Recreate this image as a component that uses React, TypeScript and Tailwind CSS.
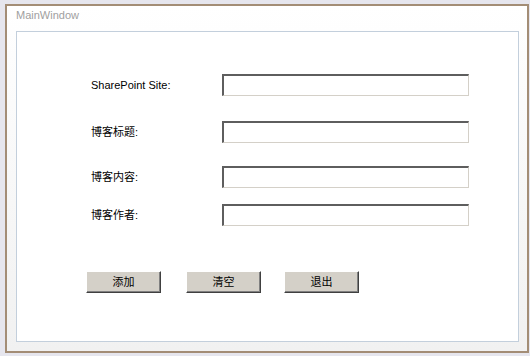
const font = { fontFamily: '"Liberation Sans", "Noto Sans CJK SC", sans-serif' };

const fields = [
  { label: 'SharePoint Site:', mt: 'mt-[42px]' },
  { label: '博客标题:', mt: 'mt-[25px]' },
  { label: '博客内容:', mt: 'mt-[23px]' },
  { label: '博客作者:', mt: 'mt-[16px]' },
];

const Field = ({ label, mt }: { label: string; mt: string }) => (
  <div className={`flex items-center ${mt}`}>
    <div className="w-[131px] text-[11px] leading-[14px] text-black">{label}</div>
    <input
      type="text"
      className="h-[22px] w-[247px] border-t-2 border-l-2 border-b border-r border-t-[#5e5e5e] border-l-[#5e5e5e] border-b-[#d4d0c8] border-r-[#d4d0c8] bg-white px-1 text-[11px] outline-none"
    />
  </div>
);

const Btn = ({ text, ml }: { text: string; ml: string }) => (
  <button
    className={`${ml} h-[22px] w-[75px] border-b border-r border-t border-l border-t-white border-l-white border-b-[#404040] border-r-[#404040] bg-[#d4d0c8] text-[11px] leading-none text-black shadow-[inset_-1px_-1px_0_#808080]`}
  >
    {text}
  </button>
);

const App = () => {
  return (
    <div className="h-[356px] w-[530px] overflow-hidden bg-[#e6e6ee] pl-[5px] pt-[4px]" style={font}>
      <div className="flex h-[349px] w-[524px] flex-col border-2 border-[#a38d76] bg-gradient-to-b from-white to-[#f1f1f1]">
        <div className="h-[25px] pl-[9px] pt-[2px] text-[11px] leading-[14px] text-[#a0a0a0]">MainWindow</div>
        <div className="ml-[9px] h-[311px] w-[503px] border border-[#c3cfdc] bg-white">
          <div className="pl-[74px]">
            {fields.map((f) => (
              <Field key={f.label} label={f.label} mt={f.mt} />
            ))}
          </div>
          <div className="mt-[45px] flex pl-[69px]">
            <Btn text="添加" ml="ml-0" />
            <Btn text="清空" ml="ml-[25px]" />
            <Btn text="退出" ml="ml-[23px]" />
          </div>
        </div>
      </div>
    </div>
  );
};

export default App;
